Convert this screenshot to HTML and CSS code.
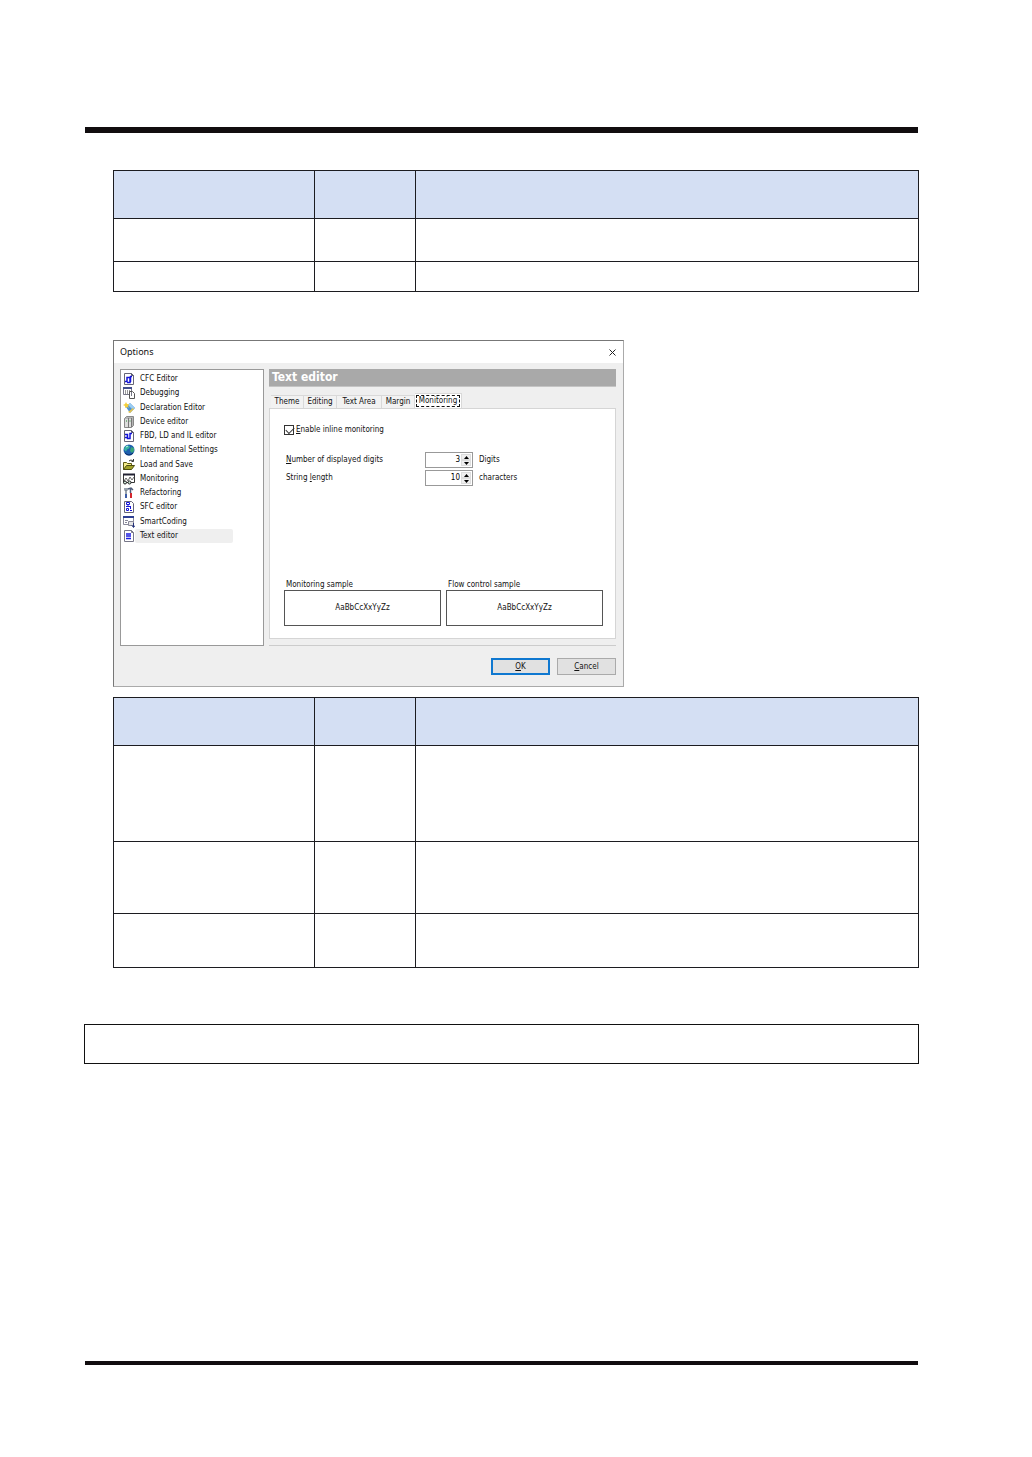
FILE: index.html
```html
<!DOCTYPE html>
<html lang="en">
<head>
    <meta charset="UTF-8">
    <meta name="viewport" content="width=device-width, initial-scale=1.0">
    <title>Options - Text editor</title>
    <link rel="stylesheet" href="styles.css">
</head>
<body>

    <div class="page">
        <hr class="rule-top">

        <div class="content">
            <table class="spec">
                <tr class="head"><th></th><th></th><th></th></tr>
                <tr class="h43"><td></td><td></td><td></td></tr>
                <tr class="h30"><td></td><td></td><td></td></tr>
            </table>

            <div class="dialog">
                <div class="titlebar">
                    <span>Options</span>
                    <button class="close" aria-label="Close">
                        <svg width="7" height="7" viewBox="0 0 7 7"><path d="M0.5 0.5l6 6M6.5 0.5l-6 6" stroke="#222" fill="none"/></svg>
                    </button>
                </div>

                <div class="panes">
                    <div class="category-list">
                        <button class="category">
                            <svg viewBox="0 0 12 12"><path d="M1.500 0.500h7l2 2v9h-9z" fill="#fff" stroke="#667"/><path d="M8.500 0.500v2h2" fill="none" stroke="#556"/><path d="M2 8.500h2v-4h3v5h-3M7 3.500h2M7.500 9v-6" fill="none" stroke="#1414d8" stroke-width="1.500"/></svg>
                            CFC Editor
                        </button>
                        <button class="category">
                            <svg viewBox="0 0 12 12"><path d="M0.500 1.500h8v6h-8z" fill="#fff" stroke="#778"/><path d="M0 1h9" stroke="#44508c" stroke-width="2"/><path d="M2 4h1M4 4h1M6 4h1M2 6h1M4 6h1" stroke="#333"/><path d="M6.500 4.500h3l2 2v5h-5z" fill="#fff" stroke="#555"/><path d="M8.500 5v4" stroke="#778"/></svg>
                            Debugging
                        </button>
                        <button class="category">
                            <svg viewBox="0 0 12 12"><path d="M3 5l4-4 5 5-5 5z" fill="#4e93d2"/><path d="M5 3l2-2 5 5-2 2z" fill="#9accf2"/><path d="M3 0l1 2 2 0-1 2 1 2-2-1-2 1 0-2-2-1 2-1z" fill="#f4cf3b"/><path d="M5 10l5-4 1 1-4 4z" fill="#e6c34a"/></svg>
                            Declaration Editor
                        </button>
                        <button class="category">
                            <svg viewBox="0 0 12 12"><path d="M1.500 2.500l2-2h7v9l-2 2h-7z" fill="#b5b5b5" stroke="#888"/><path d="M2 3h3v8H2zM6 3h2v8H6z" fill="#ddd"/><path d="M5.500 2v10M8.500 2v9" stroke="#777"/><path d="M3 5h1M6.500 5h1" stroke="#278a35"/></svg>
                            Device editor
                        </button>
                        <button class="category">
                            <svg viewBox="0 0 12 12"><path d="M1.500 0.500h7l2 2v9h-9z" fill="#fff" stroke="#667"/><path d="M8.500 0.500v2h2" fill="none" stroke="#556"/><path d="M2 4.500h2.500v4h2.500v-5h2M2 7.500h2" fill="none" stroke="#1414d8" stroke-width="1.500"/></svg>
                            FBD, LD and IL editor
                        </button>
                        <button class="category">
                            <svg viewBox="0 0 12 12"><circle cx="6" cy="6" r="5.500" fill="#1d5fae"/><path d="M2 2.500l3-1 2 1-1 2-2 1-1 2-2-2z" fill="#39b4a0"/><path d="M8 3l3 1v3l-2 2-2-2z" fill="#39a57a"/><path d="M3 3l2-1" stroke="#c8f4ee"/><path d="M2 9q4 4 8 0" stroke="#0c2a66" fill="none"/></svg>
                            International Settings
                        </button>
                        <button class="category">
                            <svg viewBox="0 0 12 12"><path d="M0.500 10.500v-7h3l1 1h4v2" fill="#f5eb8a" stroke="#5d5a14"/><path d="M0.500 10.500l3-4h8l-3 4z" fill="#a3a32a" stroke="#4d4d10"/><path d="M6 2q2-2 4 0M10.500 0v2.500h-2" fill="none" stroke="#333"/></svg>
                            Load and Save
                        </button>
                        <button class="category">
                            <svg viewBox="0 0 12 12"><path d="M0.500 1.500h11v8h-11z" fill="#fff" stroke="#333"/><path d="M0 1.500h12" stroke="#223" stroke-width="2"/><path d="M1 8l2-3 2 3 2-4 2 3 2-3" fill="none" stroke="#666"/><circle cx="2" cy="9.500" r="1.500" fill="#cde8d8" stroke="#222"/><circle cx="6.500" cy="9.500" r="1.500" fill="#cde8d8" stroke="#222"/></svg>
                            Monitoring
                        </button>
                        <button class="category">
                            <svg viewBox="0 0 12 12"><path d="M2 1v2l1 1 1-1V1M3 4v7" fill="none" stroke="#7b8794" stroke-width="1.500"/><path d="M5 2l3-1 2 2M7.500 2v4" fill="none" stroke="#4c5a78" stroke-width="1.500"/><path d="M7 6h2v5H7z" fill="#d3262e"/><path d="M2 7h2v4H2z" fill="#3d5da8"/></svg>
                            Refactoring
                        </button>
                        <button class="category">
                            <svg viewBox="0 0 12 12"><path d="M1.500 0.500h7l2 2v9h-9z" fill="#fff" stroke="#667"/><path d="M3.500 1.500h3v2h-3zM5 4v2M3 5.500h5M3.500 7.500h2v2h-2zM7.500 6v2M7 9.500h2" fill="none" stroke="#1414d8"/></svg>
                            SFC editor
                        </button>
                        <button class="category">
                            <svg viewBox="0 0 12 12"><path d="M0.500 1.500h10v7h-10z" fill="#fff" stroke="#889"/><path d="M0 1h11" stroke="#2e3f92" stroke-width="2"/><path d="M2 4.500h3M2 6.500h2" stroke="#889"/><path d="M5.500 5.500h5v4h-5z" fill="#e4e4e4" stroke="#889"/><path d="M10.500 7v4M9 9.500l1.500 2 1.500-2" fill="none" stroke="#22307a"/></svg>
                            SmartCoding
                        </button>
                        <button class="category selected">
                            <svg viewBox="0 0 12 12"><path d="M1.500 0.500h7l2 2v9h-9z" fill="#fff" stroke="#778"/><path d="M8.500 0.500v2h2" fill="none" stroke="#778"/><path d="M3 4h5M3 6h5M3 8.500h5" stroke="#1c1ce0" stroke-width="1.300"/></svg>
                            <span>Text editor</span>
                        </button>
                    </div>

                    <div class="settings">
                        <h1>Text editor</h1>

                        <div class="tabs" role="tablist">
                            <button class="tab" role="tab">Theme</button>
                            <button class="tab" role="tab">Editing</button>
                            <button class="tab wide" role="tab">Text Area</button>
                            <button class="tab" role="tab">Margin</button>
                            <button class="tab active" role="tab" aria-selected="true"><span>Monitoring</span></button>
                        </div>

                        <div class="tab-panel" role="tabpanel">
                            <div class="check">
                                <input type="checkbox" id="inline" checked>
                                <label for="inline"><u>E</u>nable inline monitoring</label>
                            </div>

                            <div class="field">
                                <label for="digits"><u>N</u>umber of displayed digits</label>
                                <div class="spinner">
                                    <input type="text" id="digits" value="3">
                                    <div class="arrows">
                                        <button aria-label="More digits"><svg viewBox="0 0 5 3"><path d="M0 3l2.500-3 2.500 3z"/></svg></button>
                                        <button aria-label="Fewer digits"><svg viewBox="0 0 5 3"><path d="M0 0l2.500 3 2.500-3z"/></svg></button>
                                    </div>
                                </div>
                                <span>Digits</span>
                            </div>
                            <div class="field">
                                <label for="length">String <u>l</u>ength</label>
                                <div class="spinner">
                                    <input type="text" id="length" value="10">
                                    <div class="arrows">
                                        <button aria-label="Longer"><svg viewBox="0 0 5 3"><path d="M0 3l2.500-3 2.500 3z"/></svg></button>
                                        <button aria-label="Shorter"><svg viewBox="0 0 5 3"><path d="M0 0l2.500 3 2.500-3z"/></svg></button>
                                    </div>
                                </div>
                                <span>characters</span>
                            </div>

                            <div class="samples">
                                <div class="sample">
                                    <p>Monitoring sample</p>
                                    <div class="sample-box">AaBbCcXxYyZz</div>
                                </div>
                                <div class="sample">
                                    <p>Flow control sample</p>
                                    <div class="sample-box">AaBbCcXxYyZz</div>
                                </div>
                            </div>
                        </div>
                        <hr class="divider">
                    </div>
                </div>

                <div class="actions">
                    <button class="btn default"><u>O</u>K</button>
                    <button class="btn"><u>C</u>ancel</button>
                </div>
            </div>

            <table class="spec">
                <tr class="head"><th></th><th></th><th></th></tr>
                <tr class="h96"><td></td><td></td><td></td></tr>
                <tr class="h72"><td></td><td></td><td></td></tr>
                <tr class="h54"><td></td><td></td><td></td></tr>
            </table>
        </div>

        <div class="notice"></div>

        <hr class="rule-bottom">
    </div>

</body>
</html>
```

FILE: styles.css
```css
* {
    box-sizing: border-box;
}

body {
    margin: 0;
    background-color: #fff;
    font-family: "DejaVu Sans Condensed", "Noto Sans", sans-serif;
    font-size: 8px;
    color: #111;
}

button {
    font: inherit;
    color: inherit;
    padding: 0;
    border: 0;
    background: none;
}

.page {
    display: flex;
    flex-direction: column;
    min-height: 100vh;
    padding: 127px 113px 92px 84px;
}

.rule-top,
.rule-bottom {
    margin: 0 1px;
    border: 0;
    background-color: #110d0f;
}

.rule-top {
    height: 6px;
}

.rule-bottom {
    height: 4px;
    margin-top: auto;
}

.content {
    margin: 37px 0 0 29px;
}

/* ruled tables */
.spec {
    width: 100%;
    table-layout: fixed;
    border-collapse: collapse;
}

.spec th,
.spec td {
    padding: 0;
    border: 1px solid #1c1c20;
}

.spec th:nth-child(1) {
    width: 25%;
}

.spec th:nth-child(2) {
    width: 101px;
}

.head {
    height: 48px;
    background-color: #d4dff3;
}

.h30 { height: 30px; }
.h43 { height: 43px; }
.h54 { height: 54px; }
.h72 { height: 72px; }
.h96 { height: 96px; }

/* options dialog */
.dialog {
    width: 511px;
    max-width: 100%;
    margin: 48px 0 10px;
    border: 1px solid #777;
    border-right-color: #aaa;
    border-bottom-color: #aaa;
    background-color: #efefef;
    line-height: 12px;
}

.titlebar {
    display: flex;
    justify-content: space-between;
    align-items: center;
    height: 22px;
    padding: 0 7px 0 6px;
    background-color: #fff;
    font-family: "Noto Sans", sans-serif;
    font-size: 9px;
}

.close {
    display: flex;
}

.panes {
    display: flex;
    gap: 5px;
    padding: 6px 7px 0 6px;
}

.category-list {
    display: flex;
    flex-direction: column;
    width: 144px;
    height: 277px;
    padding: 2px 30px 102px 2px;
    border: 1px solid #999;
    background-color: #fff;
}

.category {
    display: flex;
    flex: 1;
    align-items: center;
    gap: 5px;
    white-space: nowrap;
}

.category svg {
    width: 12px;
    height: 12px;
}

.category.selected {
    gap: 0;
}

.category.selected span {
    flex: 1;
    padding: 1px 5px;
    border-radius: 2px;
    background-color: #efefef;
    text-align: left;
}

.settings {
    display: flex;
    flex: 1;
    flex-direction: column;
}

.settings h1 {
    margin: 0;
    padding: 0 3px;
    border-bottom: 1px solid #c4c4c4;
    background-color: #a9a9a9;
    color: #fff;
    font-size: 12px;
    line-height: 17px;
}

.tabs {
    display: flex;
    align-items: flex-end;
    height: 21px;
    padding-left: 2px;
}

.tab {
    width: 33px;
    height: 13px;
    border: 1px solid #d9d9d9;
    border-width: 1px 1px 0 0;
    background-color: #f2f2f2;
}

.tab.wide {
    width: 45px;
}

.tab.active {
    width: 47px;
    height: 15px;
    background-color: #fff;
}

.tab.active span {
    display: block;
    height: 12px;
    margin: 0 1px 1px;
    border: 1px dashed #111;
    line-height: 10px;
}

.tab-panel {
    display: flex;
    flex-direction: column;
    height: 231px;
    padding: 15px 12px 12px 14px;
    border: 1px solid #d5d5d5;
    background-color: #fff;
}

.check {
    display: flex;
    align-items: center;
    gap: 2px;
    height: 12px;
    margin-bottom: 16px;
}

.check input {
    appearance: none;
    width: 10px;
    height: 10px;
    margin: 0;
    border: 1px solid #333;
    background-color: #fff;
}

/* tick mark */
.check input:checked::before {
    content: "";
    display: block;
    width: 7px;
    height: 4px;
    margin: 1px 0 0 1px;
    border: solid #333;
    border-width: 0 0 1px 1px;
    transform: rotate(-45deg);
}

.field {
    display: flex;
    align-items: center;
    height: 16px;
    margin-bottom: 2px;
    padding-left: 2px;
}

.field label {
    width: 139px;
}

.spinner {
    display: flex;
    width: 48px;
    height: 16px;
    margin-right: 6px;
    padding: 1px;
    border: 1px solid #999;
    background-color: #fff;
}

.spinner input {
    flex: 1;
    min-width: 0;
    padding: 0 1px;
    border: 0;
    font: inherit;
    text-align: right;
}

.arrows {
    display: flex;
    flex-direction: column;
    width: 10px;
}

.arrows button {
    display: flex;
    flex: 1;
    align-items: center;
    justify-content: center;
    border: 1px solid #ddd;
    background-color: #efefef;
}

.arrows svg {
    width: 5px;
    height: 3px;
}

.samples {
    display: flex;
    gap: 5px;
    margin-top: auto;
}

.sample {
    flex: 1;
}

.sample p {
    margin: 0 0 0 2px;
    line-height: 11px;
}

.sample-box {
    height: 36px;
    border: 1px solid #555;
    line-height: 34px;
    text-align: center;
}

.divider {
    width: 100%;
    height: 1px;
    margin: 6px 0 0;
    border: 0;
    background-color: #ccc;
}

.actions {
    display: flex;
    justify-content: flex-end;
    gap: 7px;
    padding: 12px 7px 11px;
}

.btn {
    width: 59px;
    height: 17px;
    border: 1px solid #aaa;
    background-color: #e1e1e1;
}

.btn.default {
    border: 2px solid #0f78d0;
}

/* framed note under the tables */
.notice {
    height: 40px;
    margin-top: 56px;
    border: 1px solid #111;
}
```
